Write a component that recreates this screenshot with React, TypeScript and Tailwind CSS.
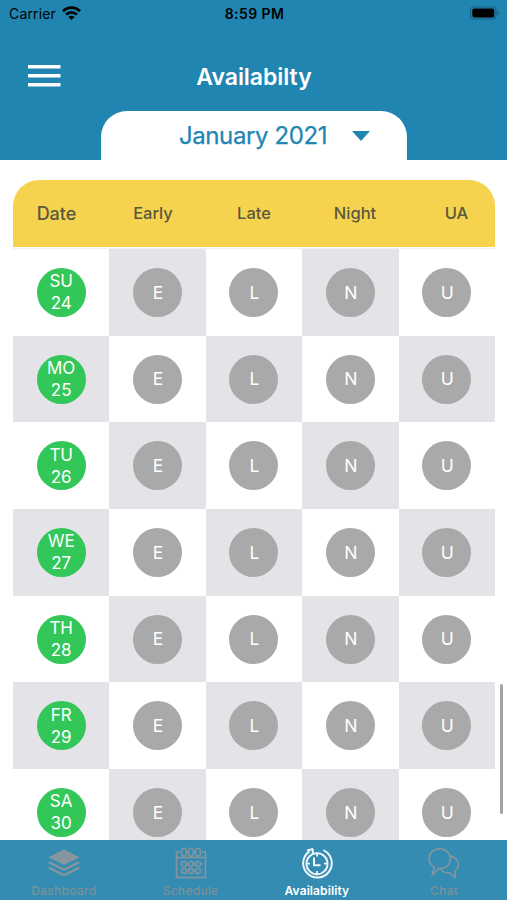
import type { ReactNode } from 'react';

const days = [
    { name: 'SU', date: 24 },
    { name: 'MO', date: 25 },
    { name: 'TU', date: 26 },
    { name: 'WE', date: 27 },
    { name: 'TH', date: 28 },
    { name: 'FR', date: 29 },
    { name: 'SA', date: 30 },
];

const shifts = ['E', 'L', 'N', 'U'];

function StatusBar() {
    return (
        <div className="grid h-7 grid-cols-3 items-center pb-0.5 pl-[9px] pr-[7px] text-black">
            <div className="flex items-center gap-[6px]">
                <span className="text-[14px] tracking-[0.15px]">Carrier</span>
                <svg width="19" height="14" viewBox="0 0 19 14" fill="none" stroke="currentColor" strokeWidth="2.7">
                    <path d="M1 5.2C5.7.4 13.3.4 18 5.2" />
                    <path d="M4.1 8.6c3-3 7.8-3 10.8 0" />
                    <path d="M9.5 14 6.4 10.9c1.7-1.6 4.5-1.6 6.2 0Z" fill="currentColor" stroke="none" />
                </svg>
            </div>
            <span className="text-center text-[14px] font-semibold tracking-[0.4px]">8:59 PM</span>
            <svg width="31" height="14" viewBox="0 0 31 14" className="justify-self-end">
                <rect x="1.5" y="1" width="25.5" height="12" rx="3.5" fill="none" stroke="#17607f" strokeWidth="1.2" />
                <rect x="3.3" y="2.5" width="22" height="9" rx="2" fill="#000" />
                <path d="M28.5 5v4.4c2-.7 2-3.7 0-4.4Z" fill="#17607f" />
            </svg>
        </div>
    );
}

function Header() {
    return (
        <header className="flex h-40 shrink-0 flex-col bg-[#2185b2]">
            <StatusBar />
            <div className="grid h-[83px] grid-cols-[101px_1fr_101px] items-center pt-[15px]">
                <button className="-mt-0.5 ml-[27.5px]" aria-label="Menu">
                    <svg width="33" height="22" viewBox="0 0 33 22" fill="#fff">
                        <path d="M0 0h32.5v3.6H0ZM0 9h32.5v3.6H0ZM0 18h32.5v3.6H0Z" />
                    </svg>
                </button>
                <h1 className="pl-px text-center text-[23px] leading-7 font-semibold tracking-[-0.05px] text-white">Availabilty</h1>
            </div>
            <button className="mx-auto flex h-[49px] w-[306px] items-center justify-center rounded-t-[26px] bg-white text-[#2185b2]">
                <span className="ml-[42px] text-[24px] tracking-[-0.4px] [-webkit-text-stroke:0.25px_#2185b2]">January 2021</span>
                <svg width="18" height="10" viewBox="0 0 18 10" className="ml-[25px]">
                    <path d="M0 0h18L9 10Z" fill="currentColor" />
                </svg>
            </button>
        </header>
    );
}

function DayRow({ name, date, index }: { name: string; date: number; index: number }) {
    const even = index % 2 === 0;
    return (
        <div className="grid h-[86.7px] grid-cols-5 text-white">
            <div className={`flex items-center justify-center ${even ? 'bg-white' : 'bg-[#e4e3e8]'}`}>
                <div className="flex size-[49px] flex-col items-center justify-center rounded-full bg-[#33c759] text-[17px] leading-[22px]">
                    <span>{name}</span>
                    <span>{date}</span>
                </div>
            </div>
            {shifts.map((shift, i) => (
                <div key={shift} className={`flex items-center justify-center ${even === (i % 2 === 0) ? 'bg-[#e4e3e8]' : 'bg-white'}`}>
                    <div className="flex size-[49px] items-center justify-center rounded-full bg-[#a9a9a9] pt-px pl-px text-[17.5px]">{shift}</div>
                </div>
            ))}
        </div>
    );
}

function NavItem({ label, active, children }: { label: string; active?: boolean; children: ReactNode }) {
    return (
        <a className={`flex flex-col items-center pt-[7px] ${active ? 'font-semibold text-white' : 'pl-px font-medium text-[#7c9098]'}`}>
            <svg width="32" height="32" viewBox="0 0 32 32" fill="none" stroke={active ? '#ecf7fb' : '#87959c'} strokeWidth="1.5">
                {children}
            </svg>
            <span className={`mt-1 text-[12px] leading-4 ${active ? 'tracking-[0.1px]' : 'tracking-[0.3px]'}`}>{label}</span>
        </a>
    );
}

function BottomNav() {
    return (
        <nav className="grid h-[60px] shrink-0 grid-cols-4 bg-[#348cb2]">
            <NavItem label="Dashboard">
                <path d="m16 2.5 15.5 7.7L16 18 .5 10.2Z" fill="#87959c" stroke="none" />
                <path d="m1 15.2 15 7.5 15-7.5M1 20.7l15 7.5 15-7.5" strokeWidth="2.4" />
            </NavItem>
            <NavItem label="Schedule">
                <path d="M5 5H1.5v25.5h29V5H27M1.5 10.5h29" />
                {[9, 16, 23].map((x) => (
                    <g key={x}>
                        <ellipse cx={x} cy="5.2" rx="2.5" ry="4" />
                        <circle cx={x} cy="17" r="2.4" />
                        <circle cx={x} cy="24" r="2.4" />
                    </g>
                ))}
                <path d="M11.5 5h2M18.5 5h2M5 17h1.6M11.4 17h2.2M18.4 17h2.2M25.4 17H27M11.4 24h2.2M18.4 24h2.2" />
            </NavItem>
            <NavItem label="Availability" active>
                {/* outer ring stays open at the top for the arrow */}
                <path d="M22.3 3.2A14.3 14.3 0 1 1 8.5 4.4" strokeWidth="2" />
                <path d="M6 3.4 12.2 2M11.8 2v5.5" strokeWidth="2" />
                <circle cx="16" cy="16.7" r="10.6" strokeWidth="1.9" />
                <path d="M13 10.5v7.8h6.5" strokeWidth="2" />
                <path d="M16 6v3.5M16 24v3.5M5.5 16.7H9M23 16.7h3.5" strokeWidth="1.8" />
            </NavItem>
            <NavItem label="Chat">
                <path d="M6.3 20.2C2.5 17.8 1 14.7 1 11.8 1 6 5.8 1.8 11.7 1.8S22.3 6 22.3 11.8c0 6.5-5.6 10.4-11.8 9.8L4.2 27.5Z" />
                <path d="M22.3 9c4.9.8 8.2 4.3 8.2 8.5 0 2.6-1.3 4.8-3.3 6.3v6.7l-5.8-4.7c-4 .6-7.3-1.2-8.6-4.3" />
            </NavItem>
        </nav>
    );
}

export default function App() {
    return (
        <div className="relative flex h-[900px] w-[507px] flex-col overflow-hidden bg-white font-['Inter','Liberation_Sans',sans-serif]">
            <Header />
            <main className="flex min-h-0 flex-1 flex-col overflow-hidden pt-5 pr-3 pl-[13px]">
                <div className="flex h-[67px] shrink-0 items-center rounded-t-[26px] bg-[#f6d34f] text-center text-[16.5px] font-medium text-[#5b573f]">
                    <span className="w-[87px] text-[18px]">Date</span>
                    <span className="w-[106px]">Early</span>
                    <span className="w-[96px]">Late</span>
                    <span className="w-[106px]">Night</span>
                    <span className="w-[87px] pl-[10px]">UA</span>
                </div>
                <div className="mt-px shrink-0 border-t border-[#f1eff0]">
                    {days.map((day, i) => (
                        <DayRow key={day.name} {...day} index={i} />
                    ))}
                </div>
            </main>
            <BottomNav />
            {/* Scroll indicator */}
            <div className="absolute top-[684px] right-1 h-[130px] w-[3.5px] rounded-full bg-[#a3a3a3]" />
        </div>
    );
}
